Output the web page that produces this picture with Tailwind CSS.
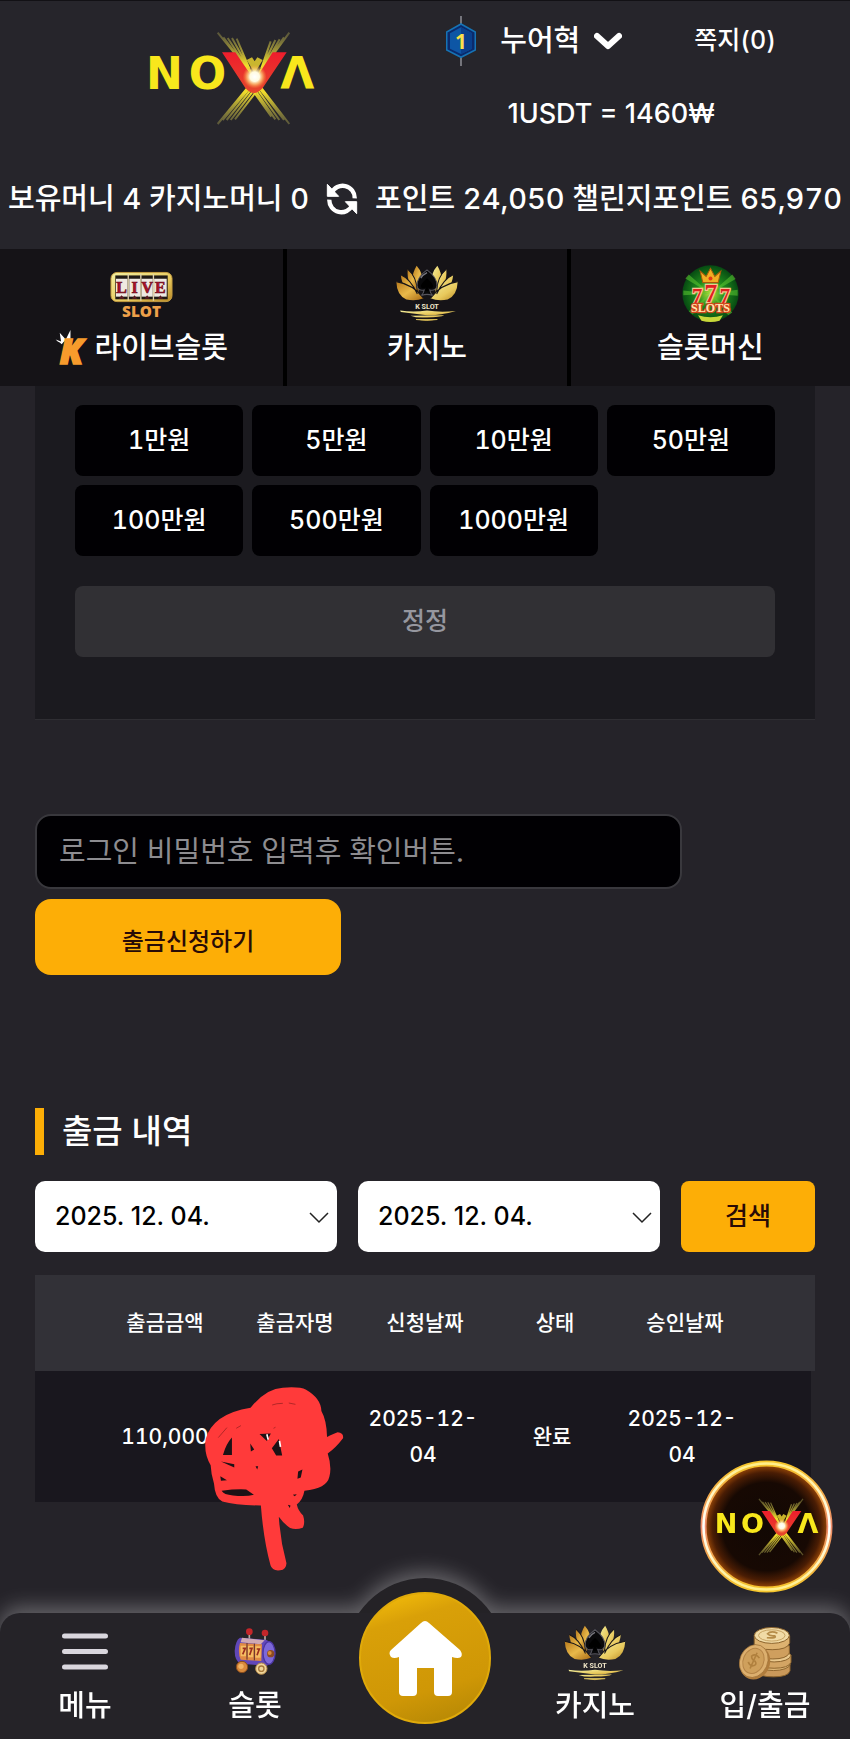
<!DOCTYPE html>
<html lang="ko">
<head>
    <meta charset="UTF-8">
    <meta name="viewport" content="width=device-width, initial-scale=1.0">
    <title>NOVA - 출금</title>
    <script src="https://cdn.jsdelivr.net/npm/@tailwindcss/browser@4"></script>
</head>
<body class="min-h-screen bg-[#252329] font-['Inter','Noto_Sans_CJK_KR',sans-serif] text-white tabular-nums">

<!-- Shared logos -->
<svg width="0" height="0" class="absolute" aria-hidden="true">
    <defs>
        <linearGradient id="gold" x1="0" x2="1" y1="0" y2="1">
            <stop offset="0" stop-color="#b87a1c"/>
            <stop offset=".5" stop-color="#e9b94a"/>
            <stop offset="1" stop-color="#a86a14"/>
        </linearGradient>
        <linearGradient id="goldLight" x1="0" x2="1" y1="0" y2="1">
            <stop offset="0" stop-color="#f3f0a0"/>
            <stop offset=".6" stop-color="#e8c95c"/>
            <stop offset="1" stop-color="#b98a26"/>
        </linearGradient>
        <linearGradient id="red" x1="0" x2="0" y1="0" y2="1">
            <stop offset="0" stop-color="#ee1d2c"/>
            <stop offset="1" stop-color="#e5482c"/>
        </linearGradient>
        <radialGradient id="flare">
            <stop offset="0" stop-color="#fff"/>
            <stop offset=".4" stop-color="#fffbe0"/>
            <stop offset=".65" stop-color="#ffd27a" stop-opacity=".7"/>
            <stop offset="1" stop-color="#ff9a3a" stop-opacity="0"/>
        </radialGradient>
        <linearGradient id="rays" gradientUnits="userSpaceOnUse" x1="0" x2="0" y1="40" y2="312">
            <stop offset="0" stop-color="#8f8a4a" stop-opacity=".5"/>
            <stop offset=".35" stop-color="#f0dc2c"/>
            <stop offset=".65" stop-color="#f0dc2c"/>
            <stop offset="1" stop-color="#8f8a4a" stop-opacity=".5"/>
        </linearGradient>
    </defs>
    <symbol id="nova" viewBox="0 0 600 345">
        <g stroke="url(#rays)" stroke-width="6" fill="none">
            <path d="M263 38L376 176M280 52L372 172M293 54L366 165M306 54L362 155M320 56L358 145"/>
            <path d="M478 38L376 176M462 52L380 172M449 58L386 165M436 60L390 155M422 64L394 145"/>
            <path d="M263 312L372 180M278 300L376 184M290 300L380 188M302 300L384 194M315 298L390 200"/>
            <path d="M478 312L376 180M462 300L372 184M448 300L368 188M436 298L364 194M424 290L360 200"/>
        </g>
        <g font-family="DejaVu Sans" font-weight="700" font-size="132" fill="#f8e71c" text-anchor="middle">
            <text x="103" y="206">N</text>
            <text x="232" y="206">O</text>
            <text x="502" y="206">Λ</text>
        </g>
        <path d="M276 97H316L374 182L428 97H470L398 204Q372 234 346 204Z" fill="url(#red)"/>
        <path d="M350 120L374 160L398 120L382 112L374 124L366 112Z" fill="#e6d030" opacity=".85"/>
        <circle cx="374" cy="170" r="36" fill="url(#flare)"/>
    </symbol>
    <symbol id="lotus" viewBox="0 0 180 165">
        <g fill="url(#gold)">
            <path d="M60 2Q82 26 76 60Q62 70 66 78Q34 44 60 2Z"/>
            <path d="M34 12Q60 34 62 76Q30 58 34 12Z"/>
            <path d="M14 28Q42 40 62 84Q18 76 14 28Z"/>
            <path d="M1 48Q50 56 80 96Q58 106 30 100Q2 88 1 48Z"/>
        </g>
        <g fill="url(#goldLight)">
            <path d="M120 2Q98 26 104 60Q118 70 114 78Q146 44 120 2Z"/>
            <path d="M146 12Q120 34 118 76Q150 58 146 12Z"/>
            <path d="M166 28Q138 40 118 84Q162 76 166 28Z"/>
            <path d="M179 48Q130 56 100 96Q122 106 150 100Q178 88 179 48Z"/>
        </g>
        <g fill="none" stroke="#151317" stroke-width="3">
            <path d="M34 12Q60 34 62 76M14 28Q42 40 62 84M1 48Q50 56 80 96"/>
            <path d="M146 12Q120 34 118 76M166 28Q138 40 118 84M179 48Q130 56 100 96"/>
        </g>
        <path d="M90 14Q120 36 119 60Q116 76 98 72Q100 82 106 88Q90 82 74 88Q80 82 82 72Q64 76 61 60Q60 36 90 14Z" fill="#08080a" stroke="#55545c" stroke-width="3"/>
        <path d="M90 38Q108 54 108 62Q104 72 92 64L96 76H84L88 64Q76 72 72 62Q72 54 90 38Z" fill="#000"/>
        <path d="M72 38Q78 28 90 22" stroke="#77767e" stroke-width="4" fill="none"/>
        <text x="90" y="127" text-anchor="middle" font-family="Roboto" font-weight="700" font-size="21" fill="#f0e6c8">K SLOT</text>
        <path d="M12 132Q50 138 90 132Q130 138 174 133Q130 146 90 146L14 136Z" fill="url(#goldLight)"/>
        <path d="M42 147Q90 146 140 146Q130 152 90 152Q60 154 42 147Z" fill="url(#goldLight)"/>
        <path d="M58 158H120Q90 164 58 158Z" fill="url(#goldLight)" stroke="#e8c95c" stroke-width="2"/>
    </symbol>
</svg>

<!-- Header -->
<header class="border-t border-[#121115] bg-[#26252b] font-medium">
    <div class="flex items-start justify-between pr-[74px] pl-[130px]">
        <a href="#" aria-label="NOVA" class="mt-[19px]"><svg class="h-[115px] w-[200px]"><use href="#nova"/></svg></a>
        <div class="flex flex-col items-center">
            <div class="flex h-20 items-center">
                <svg viewBox="0 0 90 150" class="h-[50px] w-[30px]">
                    <path d="M45 0V150" stroke="#85858c" stroke-width="5"/>
                    <path d="M45 24L88 48V102L45 124L2 102V48Z" fill="#0b2a6b" stroke="#1673b5" stroke-width="5"/>
                    <path d="M45 34L78 52V98L45 114L12 98V52Z" fill="#0d56a5"/>
                    <path d="M45 34L78 52V98L45 114Z" fill="#0a3f8c"/>
                    <text x="45" y="98" text-anchor="middle" font-family="Open Sans" font-weight="700" font-size="62" fill="#fbe04a">1</text>
                </svg>
                <button class="ml-6 flex items-center gap-3.5 text-[29px]">누어혁
                    <svg viewBox="0 0 28 18" class="h-[18px] w-7" fill="none" stroke="#fff" stroke-width="6" stroke-linecap="round" stroke-linejoin="round"><path d="M3 4L14 14L25 4"/></svg>
                </button>
                <a href="#" class="ml-[72px] text-[25px]">쪽지(0)</a>
            </div>
            <p class="h-[68px] text-[27px] leading-[66px] normal-nums">1USDT = 1460₩</p>
        </div>
    </div>
    <div class="flex h-[100px] items-center justify-between px-2 text-[29px] whitespace-nowrap">
        <span>보유머니 4 카지노머니 0</span>
        <button aria-label="새로고침"><svg viewBox="0 0 96 96" class="size-8">
            <path d="M17 30A36 36 0 0 1 86 46M79 66A36 36 0 0 1 10 50" fill="none" stroke="#fff" stroke-width="13"/>
            <path d="M4 4V40H38ZM92 92V56H58Z" fill="#fff" stroke="#fff" stroke-width="3" stroke-linejoin="round"/>
        </svg></button>
        <span>포인트 24,050 챌린지포인트 65,970</span>
    </div>
    <nav class="grid grid-cols-3 bg-[#151317] text-[29px] leading-11">
        <a href="#" class="flex h-[137px] flex-col items-center gap-1 pt-4">
            <svg viewBox="0 0 190 171" class="h-[57px] w-[63px]">
                <rect x="3" y="22" width="184" height="88" rx="18" fill="url(#goldLight)" stroke="#c59c42" stroke-width="3"/>
                <rect x="16" y="31" width="158" height="72" fill="#201a14"/>
                <g fill="#efe9e2"><rect x="18" y="41" width="35" height="54"/><rect x="58" y="41" width="33" height="54"/><rect x="95" y="41" width="34" height="54"/><rect x="133" y="41" width="38" height="54"/></g>
                <path d="M55 27V107M93 27V107M131 27V107" stroke="#e0d3ae" stroke-width="4"/>
                <g font-family="Liberation Serif" font-weight="700" font-size="48" fill="#b0122a" stroke="#6e1020" stroke-width="2" text-anchor="middle">
                    <text x="35" y="83">L</text><text x="74" y="83">I</text><text x="112" y="83">V</text><text x="152" y="83">E</text>
                </g>
                <path d="M26 101L35 91L44 101ZM66 101L74 91L82 101ZM104 101L112 91L120 101ZM144 101L152 91L160 101Z" fill="#5c1a20"/>
                <text x="95" y="156" text-anchor="middle" font-family="Open Sans" font-weight="800" font-size="46" fill="#eda04a">SLOT</text>
            </svg>
            <span class="flex items-center gap-1">
                <svg viewBox="0 0 104 110" class="h-[37px] w-[35px]">
                    <path d="M8 34L2 28L18 34L14 8L32 28L46 0V28Q28 28 20 42Q14 36 8 34Z" fill="#fff"/>
                    <text x="14" y="102" font-family="Open Sans" font-style="italic" font-weight="800" font-size="104" fill="#f79b2c" stroke="#f79b2c" stroke-width="5">K</text>
                </svg>
                라이브슬롯
            </span>
        </a>
        <a href="#" class="flex h-[137px] flex-col items-center gap-1 border-l-4 border-black pt-4">
            <svg class="h-[57px] w-[62px]"><use href="#lotus"/></svg>
            카지노
        </a>
        <a href="#" class="flex h-[137px] flex-col items-center gap-1 border-l-4 border-black pt-4">
            <svg viewBox="0 0 170 170" class="size-[57px]">
                <defs><radialGradient id="green"><stop offset="0" stop-color="#b8e33c"/><stop offset=".5" stop-color="#1f8a1c"/><stop offset="1" stop-color="#064a12"/></radialGradient></defs>
                <circle cx="85" cy="85" r="84" fill="url(#green)"/>
                <path d="M85 85L10 40L20 28ZM85 85L150 28L160 42ZM85 85L4 90L4 76ZM85 85L166 74V92ZM85 85L20 138L32 148ZM85 85L150 142L138 150Z" fill="#5cc832" opacity=".55"/>
                <path d="M62 52L54 18L72 34L85 10L98 34L116 18L108 52Z" fill="#f2ae22" stroke="#a8590c" stroke-width="3"/>
                <circle cx="85" cy="40" r="6" fill="#e23b16"/>
                <g font-family="Liberation Serif" font-weight="700" fill="#e02020" stroke="#f4c890" stroke-width="7" text-anchor="middle" paint-order="stroke">
                    <text x="45" y="112" font-size="62">7</text><text x="128" y="112" font-size="62">7</text>
                    <text x="86" y="110" font-size="76">7</text>
                    <text x="85" y="140" font-size="36" fill="#ffe6b0" stroke="#d0441c">SLOTS</text>
                </g>
                <path d="M48 150Q85 162 122 150L112 166Q85 174 58 166Z" fill="#c9d83a"/>
            </svg>
            슬롯머신
        </a>
    </nav>
</header>

<main class="px-[35px] pb-[200px]">
    <!-- Amount buttons -->
    <section class="border-b border-[#2f2e33] bg-[#1b1a1f] px-10 pt-[19px] pb-[62px] text-[25px] font-medium">
        <div class="grid grid-cols-4 gap-[9px]">
            <button class="h-[71px] rounded-lg bg-[#010003]">1만원</button>
            <button class="h-[71px] rounded-lg bg-[#010003]">5만원</button>
            <button class="h-[71px] rounded-lg bg-[#010003]">10만원</button>
            <button class="h-[71px] rounded-lg bg-[#010003]">50만원</button>
            <button class="h-[71px] rounded-lg bg-[#010003]">100만원</button>
            <button class="h-[71px] rounded-lg bg-[#010003]">500만원</button>
            <button class="h-[71px] rounded-lg bg-[#010003]">1000만원</button>
        </div>
        <button class="mt-[30px] h-[71px] w-full rounded-lg bg-[#313034] text-[#96979f]">정정</button>
    </section>

    <!-- Password and submit -->
    <form class="mt-[94px]">
        <input type="password" aria-label="로그인 비밀번호" placeholder="로그인 비밀번호 입력후 확인버튼." class="block h-[75px] w-[83%] rounded-2xl border-2 border-[#39383d] bg-[#010003] px-[22px] text-[29px] placeholder:text-[#8d8c90]">
        <button type="button" class="mt-2.5 h-[76px] w-[306px] rounded-2xl bg-[#fdae06] pt-2.5 text-[24px] font-medium text-[#280b06]">출금신청하기</button>
    </form>

    <!-- Withdrawal history -->
    <h2 class="mt-[133px] border-l-9 border-[#fdae06] pl-[18px] text-[33px] leading-[47px] font-medium">출금 내역</h2>
    <div class="mt-[26px] flex gap-[21px] text-[25px] font-medium normal-nums">
        <div class="relative flex-1">
            <select aria-label="시작일" class="h-[71px] w-full appearance-none rounded-[10px] bg-white px-5 text-black"><option>2025. 12. 04.</option></select>
            <svg viewBox="0 0 20 12" class="pointer-events-none absolute top-[31px] right-2 h-3 w-5" fill="none" stroke="#222" stroke-width="1.5"><path d="M1 1L10 10L19 1"/></svg>
        </div>
        <div class="relative flex-1">
            <select aria-label="종료일" class="h-[71px] w-full appearance-none rounded-[10px] bg-white px-5 text-black"><option>2025. 12. 04.</option></select>
            <svg viewBox="0 0 20 12" class="pointer-events-none absolute top-[31px] right-2 h-3 w-5" fill="none" stroke="#222" stroke-width="1.5"><path d="M1 1L10 10L19 1"/></svg>
        </div>
        <button class="h-[71px] w-[134px] rounded-lg bg-[#fdae06] text-[#280b06]">검색</button>
    </div>

    <div class="relative mt-[23px]">
        <table class="w-full table-fixed border-separate border-spacing-0 text-center text-[21px] leading-9 font-medium">
            <colgroup>
                <col class="w-1/12"><col class="w-1/6"><col class="w-1/6"><col class="w-1/6"><col class="w-1/6"><col class="w-1/6"><col class="w-1/12">
            </colgroup>
            <thead class="bg-[#323137]">
                <tr class="h-24"><td></td><th class="font-medium">출금금액</th><th class="font-medium">출금자명</th><th class="font-medium">신청날짜</th><th class="font-medium">상태</th><th class="font-medium">승인날짜</th><td></td></tr>
            </thead>
            <tbody class="bg-[#19171e]">
                <tr class="h-[131px]"><td></td><td>110,000</td><td></td><td class="pr-1">2025-12-<br>04</td><td class="pr-1.5">완료</td><td class="pr-1.5">2025-12-<br>04</td><td class="border-r-4 border-[#252329]"></td></tr>
            </tbody>
        </table>
        <!-- Marker scribble over the name -->
        <svg viewBox="550 645 430 560" class="absolute top-[110px] left-[168px] h-[187px] w-[143px]">
            <path d="M693 712Q740 654 790 652Q840 648 860 658Q905 684 906 722Q922 750 923 800Q945 790 955 786Q974 788 971 804Q950 832 925 850Q938 890 930 920Q922 956 855 962Q850 990 832 1003Q836 1022 851 1036Q858 1058 850 1073Q830 1080 812 1074Q792 1060 778 1040Q782 1110 801 1180Q800 1200 782 1201Q758 1204 753 1186Q732 1110 724 1006Q650 1006 608 994Q586 984 583 940Q574 910 573 885Q552 850 558 806Q580 730 693 712Z" fill="#ff3a3a"/>
            <g fill="#1c1216">
                <path d="M637 802V854H610Q620 820 637 802ZM720 791L754 790L742 812ZM757 834L778 806L788 856H770ZM692 820L704 838L694 844ZM606 962Q650 956 680 958L703 974Q680 980 640 976Q612 974 606 962ZM604 874L644 882V892ZM602 918L622 930L604 932ZM836 904L849 898L844 922L834 926ZM805 1004L813 1006L811 1014ZM708 888L716 888L713 898ZM820 974L832 972L826 978Z"/>
            </g>
            <path d="M596 802L622 772M650 774L664 766M758 704Q770 699 790 699M808 698L828 702M762 774L768 771" stroke="#8c1c1c" stroke-width="2" fill="none"/>
            <path d="M742 792L746 808M780 812L783 830" stroke="#fff" stroke-width="5"/>
        </svg>
    </div>
</main>

<!-- Floating button -->
<a href="#" aria-label="NOVA" class="fixed right-[17px] bottom-[146px] flex size-[133px] items-center justify-center">
    <svg viewBox="0 0 133 133" class="absolute inset-0 size-full">
        <defs>
            <radialGradient id="ring"><stop offset="0" stop-color="#120804"/><stop offset=".7" stop-color="#170903"/><stop offset=".86" stop-color="#4a1d04"/><stop offset="1" stop-color="#a85008"/></radialGradient>
            <linearGradient id="neon" x1="0" x2="0" y1="0" y2="1"><stop offset="0" stop-color="#f5c52a"/><stop offset=".5" stop-color="#ee8c6c"/><stop offset="1" stop-color="#f5c52a"/></linearGradient>
            <linearGradient id="neonCore" x1="0" x2="0" y1="0" y2="1"><stop offset="0" stop-color="#ffef8a"/><stop offset=".5" stop-color="#fff"/><stop offset="1" stop-color="#ffef8a"/></linearGradient>
        </defs>
        <circle cx="66.5" cy="66.5" r="63" fill="url(#ring)" stroke="url(#neon)" stroke-width="6"/>
        <circle cx="66.5" cy="66.5" r="63" fill="none" stroke="url(#neonCore)" stroke-width="2.5"/>
    </svg>
    <svg class="relative h-[71px] w-[123px]"><use href="#nova"/></svg>
</a>

<!-- Bottom navigation -->
<nav class="fixed inset-x-0 bottom-0 text-[29px] leading-[50px] font-medium drop-shadow-[0_-6px_10px_rgba(255,255,255,0.3)]">
    <div class="absolute -top-[35px] left-1/2 size-40 -translate-x-1/2 rounded-full bg-[#242226]"></div>
    <div class="relative grid h-[126px] grid-cols-5 rounded-t-[20px] bg-[#252328]">
        <a href="#" class="flex flex-col items-center pt-3">
            <svg viewBox="0 0 46 56" class="h-14 w-[46px]" stroke="#d9d6dd" stroke-width="5" stroke-linecap="round"><path d="M2.500 11H43.500M2.500 26.500H43.500M2.500 42H43.500"/></svg>
            메뉴
        </a>
        <a href="#" class="flex flex-col items-center pt-3">
            <svg viewBox="0 0 126 168" class="h-14 w-[42px]">
                <path d="M46 24V50M93 26V54" stroke="#b9a9a0" stroke-width="5"/>
                <circle cx="46" cy="20" r="10" fill="#c4262a"/><circle cx="93" cy="24" r="10" fill="#c4262a"/>
                <path d="M18 38L95 44Q122 50 124 86Q122 116 98 122L20 116Q2 108 2 78Q4 46 18 38Z" fill="#6147b8"/>
                <path d="M24 38L92 46L80 58L20 52Z" fill="#cfa9b4"/>
                <path d="M18 54L84 58L82 108L20 104Q10 80 18 54Z" fill="#e08a45"/>
                <path d="M20 62H36V94H20ZM42 63H58V97H42ZM64 64H80V98H64Z" fill="#f5bd62"/>
                <path d="M39 54V104M61 56V106" stroke="#5c2c2c" stroke-width="3"/>
                <path d="M26 70H34L26 88M46 70H54L47 90M68 72H76L69 91" stroke="#9c2e1e" stroke-width="5" fill="none"/>
                <ellipse cx="105" cy="84" rx="18" ry="34" fill="#7d68d8" stroke="#4a35a0" stroke-width="4"/>
                <circle cx="110" cy="86" r="11" fill="#8c4a24"/><circle cx="107" cy="84" r="6" fill="#d68a3c"/>
                <circle cx="24" cy="126" r="17" fill="#d98a3c" stroke="#8a4c1c" stroke-width="3"/><circle cx="21" cy="124" r="8" fill="#f1b467"/>
                <circle cx="82" cy="131" r="17" fill="#f0d59a" stroke="#b58a4a" stroke-width="3"/><circle cx="82" cy="131" r="8" fill="none" stroke="#a87a3c" stroke-width="4"/>
            </svg>
            슬롯
        </a>
        <a href="#" aria-label="홈" class="flex justify-center">
            <svg viewBox="0 0 132 132" class="-mt-[21px] size-[132px]">
                <defs><linearGradient id="coin" x1=".3" x2=".6" y1="0" y2="1"><stop offset="0" stop-color="#f0b90a"/><stop offset=".2" stop-color="#d9a008"/><stop offset=".75" stop-color="#cf9706"/><stop offset="1" stop-color="#b98a05"/></linearGradient></defs>
                <circle cx="66" cy="66" r="65" fill="url(#coin)" stroke="#e0aa0a" stroke-width="2"/>
                <path d="M66 29Q68 29 70 31L101 58Q104 62 102 65Q99 67 93 65V100Q93 104 89 104H79Q75 104 75 100V76H58V100Q58 104 54 104H44Q40 104 40 100V65Q35 67 32 65Q29 61 32 58L62 31Q64 29 66 29Z" fill="#fff"/>
            </svg>
        </a>
        <a href="#" class="flex flex-col items-center pt-3">
            <svg class="h-14 w-[62px]"><use href="#lotus"/></svg>
            카지노
        </a>
        <a href="#" class="flex flex-col items-center pt-3">
            <svg viewBox="0 0 160 168" class="h-14 w-[53px]">
                <g stroke="#8c642c" stroke-width="3">
                    <path d="M52 118V140Q60 156 104 156Q148 156 154 138V116Z" fill="#c9985a"/>
                    <ellipse cx="104" cy="118" rx="50" ry="19" fill="#e0b878"/>
                    <path d="M56 92V114Q64 130 106 130Q150 130 157 112V90Z" fill="#d3a564"/>
                    <ellipse cx="106" cy="92" rx="50" ry="19" fill="#e8c78c"/>
                    <path d="M48 62V84Q58 102 102 102Q144 102 152 84V62Z" fill="#cf9f5e"/>
                    <path d="M46 32V56Q54 74 100 74Q146 74 153 54V32Z" fill="#ddb270"/>
                    <ellipse cx="99" cy="31" rx="53" ry="24" fill="#f1dba6"/>
                </g>
                <ellipse cx="99" cy="31" rx="40" ry="17" fill="none" stroke="#c7a262" stroke-width="3"/>
                <path d="M116 24Q96 16 86 26Q92 34 108 32Q116 40 84 38" fill="none" stroke="#b58c48" stroke-width="5"/>
                <g transform="rotate(24 46 110)">
                    <ellipse cx="50" cy="112" rx="44" ry="52" fill="#b07c3c"/>
                    <ellipse cx="44" cy="109" rx="42" ry="51" fill="#dcaf6e" stroke="#9c6e34" stroke-width="2"/>
                    <ellipse cx="43" cy="109" rx="31" ry="39" fill="#cfa05c" stroke="#b48346" stroke-width="3"/>
                    <path d="M56 94Q40 84 32 98Q36 108 48 108Q60 116 46 124Q36 126 30 118M43 82V134" fill="none" stroke="#b0803e" stroke-width="5"/>
                </g>
            </svg>
            입/출금
        </a>
    </div>
</nav>

</body>
</html>
